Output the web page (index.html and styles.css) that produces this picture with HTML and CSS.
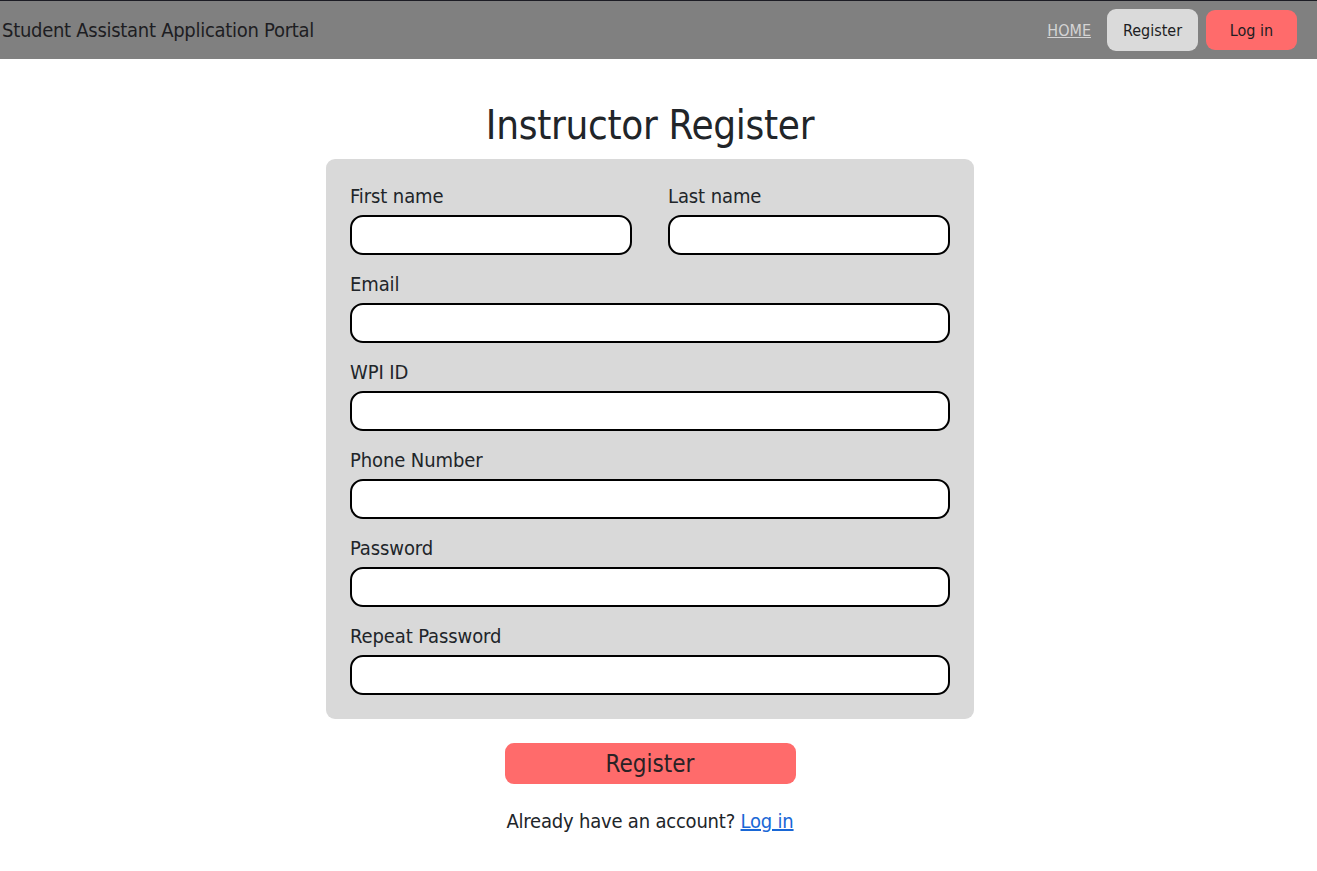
FILE: index.html
```html
<!DOCTYPE html>
<html>
<head>
<meta charset="utf-8">
<title>Instructor Register</title>
<link rel="stylesheet" href="styles.css">
</head>
<body>
<nav class="navbar">
  <span class="brand">Student Assistant Application Portal</span>
  <div class="nav-right">
    <a class="nav-home" href="#">HOME</a>
    <button class="nav-btn nav-register">Register</button>
    <button class="nav-btn nav-login">Log in</button>
  </div>
</nav>
<main class="main">
  <h1 class="title">Instructor Register</h1>
  <form class="card">
    <div class="row">
      <div class="group">
        <label class="label">First name</label>
        <input class="input" type="text">
      </div>
      <div class="group">
        <label class="label">Last name</label>
        <input class="input" type="text">
      </div>
    </div>
    <div class="group">
      <label class="label">Email</label>
      <input class="input" type="text">
    </div>
    <div class="group">
      <label class="label">WPI ID</label>
      <input class="input" type="text">
    </div>
    <div class="group">
      <label class="label">Phone Number</label>
      <input class="input" type="text">
    </div>
    <div class="group">
      <label class="label">Password</label>
      <input class="input" type="password">
    </div>
    <div class="group last">
      <label class="label">Repeat Password</label>
      <input class="input" type="password">
    </div>
  </form>
  <button class="submit" type="button">Register</button>
  <p class="footer-text">Already have an account? <a class="login-link" href="#">Log in</a></p>
</main>
</body>
</html>
```
FILE: styles.css
```css
* { box-sizing: border-box; }
html, body { margin: 0; padding: 0; }
body {
  font-family: "DejaVu Sans Condensed", "DejaVu Sans", sans-serif;
  color: #212529;
  background: #ffffff;
}
.navbar {
  height: 59px;
  border-top: 1px solid #1c1c24;
  background: #808080;
  display: flex;
  align-items: center;
  justify-content: space-between;
  padding: 0 20px 0 2px;
}
.brand {
  font-size: 20px;
  letter-spacing: -0.28px;
  color: #1d1d22;
}
.nav-right {
  display: flex;
  align-items: center;
}
.nav-home {
  color: #d4d4d4;
  font-size: 16px;
  margin-right: 16px;
}
.nav-btn {
  font-family: inherit;
  font-size: 16px;
  color: #1d1d22;
  border: none;
  border-radius: 9px;
  width: 91px;
}
.nav-register {
  background: #dadada;
  height: 42px;
  margin-right: 8px;
}
.nav-login {
  background: #ff6b6b;
  height: 40px;
}
.main {
  width: 1300px;
  display: flex;
  flex-direction: column;
  align-items: center;
}
.title {
  font-size: 40px;
  font-weight: normal;
  letter-spacing: -0.3px;
  margin: 42px 0 10px;
  line-height: 48px;
}
.card {
  width: 648px;
  background: #d9d9d9;
  border-radius: 9px;
  padding: 24px;
}
.row {
  display: flex;
  gap: 36px;
}
.row .group { flex: 1; }
.group {
  display: flex;
  flex-direction: column;
  margin-bottom: 16px;
}
.group.last { margin-bottom: 0; }
.label {
  font-size: 20px;
  line-height: 26px;
  margin-bottom: 6px;
  letter-spacing: -0.1px;
}
.input {
  height: 40px;
  width: 100%;
  border: 2px solid #000;
  border-radius: 13px;
  background: #fff;
  font-family: inherit;
  font-size: 16px;
  padding: 0 12px;
}
.submit {
  margin-top: 24px;
  width: 291px;
  height: 41px;
  background: #ff6b6b;
  border: none;
  border-radius: 9px;
  font-family: inherit;
  font-size: 24px;
  color: #2a2225;
  padding: 0;
}
.footer-text {
  font-size: 20px;
  margin: 22px 0 0;
  line-height: 30px;
  letter-spacing: -0.2px;
}
.login-link {
  color: #1867d6;
}
```
